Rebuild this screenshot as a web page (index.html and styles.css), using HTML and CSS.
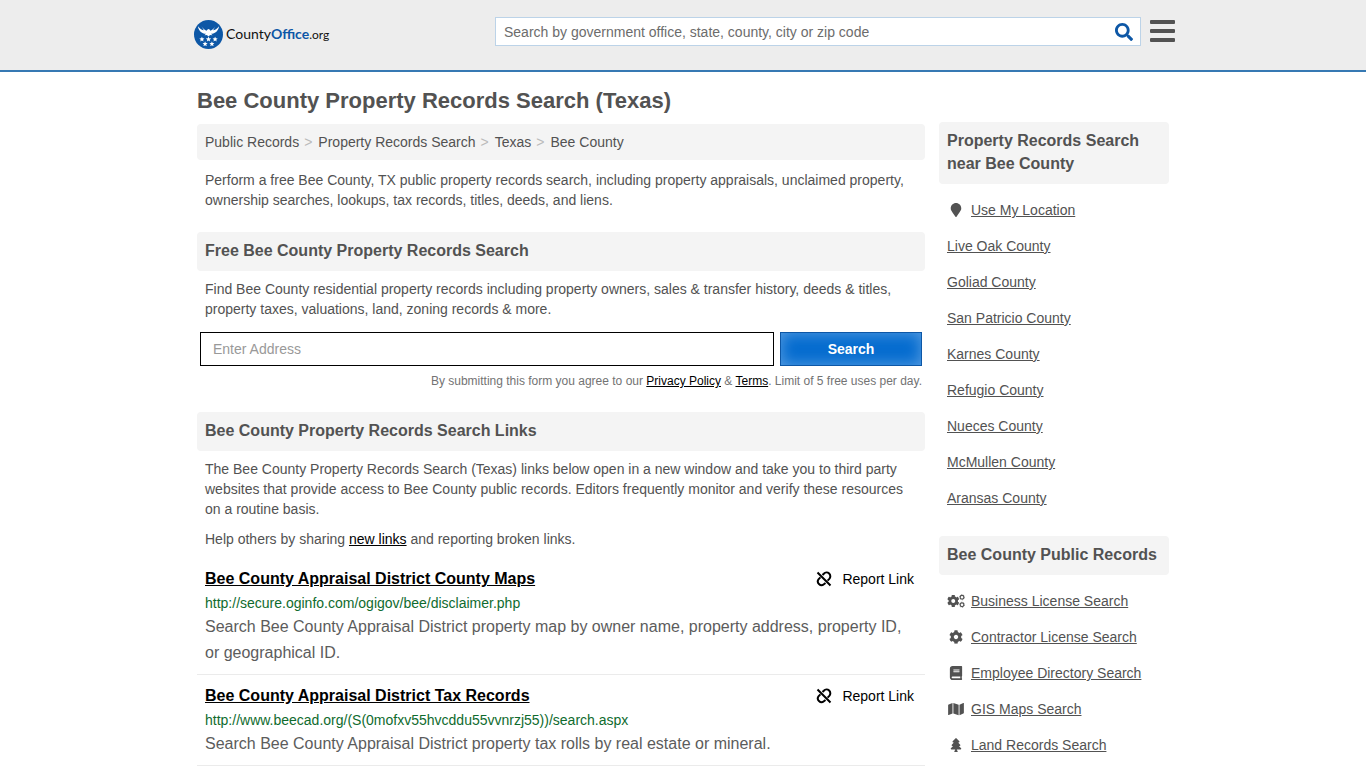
FILE: index.html
```html
<!DOCTYPE html>
<html lang="en">
<head>
<meta charset="utf-8">
<title>Bee County Property Records Search (Texas)</title>
<meta name="viewport" content="width=device-width, initial-scale=1">
<link rel="stylesheet" href="styles.css">
</head>
<body>
<svg class="defs" aria-hidden="true">
  <symbol id="cog" viewBox="0 0 512 512"><path d="M487.4 315.7l-42.6-24.6c4.3-23.2 4.3-47 0-70.2l42.6-24.6c4.9-2.8 7.1-8.6 5.5-14-11.1-35.6-30-67.8-54.7-94.6-3.8-4.1-10-5.1-14.8-2.3L380.8 110c-17.9-15.4-38.5-27.3-60.8-35.1V25.8c0-5.6-3.9-10.5-9.4-11.7-36.7-8.2-74.3-7.8-109.2 0-5.5 1.2-9.4 6.1-9.4 11.7V75c-22.2 7.9-42.8 19.8-60.8 35.1L88.7 85.5c-4.9-2.8-11-1.9-14.8 2.3-24.7 26.7-43.6 58.9-54.7 94.6-1.7 5.4.6 11.2 5.5 14L67.3 221c-4.3 23.2-4.3 47 0 70.2l-42.6 24.6c-4.9 2.8-7.1 8.6-5.5 14 11.1 35.6 30 67.8 54.7 94.6 3.8 4.1 10 5.1 14.8 2.3l42.6-24.6c17.9 15.4 38.5 27.3 60.8 35.1v49.2c0 5.6 3.9 10.5 9.4 11.7 36.7 8.2 74.3 7.8 109.2 0 5.5-1.2 9.4-6.1 9.4-11.7v-49.2c22.2-7.9 42.8-19.8 60.8-35.1l42.6 24.6c4.9 2.8 11 1.9 14.8-2.3 24.7-26.7 43.6-58.9 54.7-94.6 1.5-5.5-.7-11.3-5.6-14.1zM256 336c-44.1 0-80-35.9-80-80s35.9-80 80-80 80 35.9 80 80-35.9 80-80 80z"/></symbol>
  <symbol id="unlink" viewBox="0 0 16 16"><path fill="none" stroke="currentColor" stroke-width="2" d="M1.500 1.500l13 13M6.500 4l1.300-1.300a3.700 3.700 0 0 1 5.500 5.200l-1.700 1.700M4.400 6.400L2.700 8.100a3.700 3.700 0 0 0 5.200 5.200L9.500 12"/></symbol>
  <symbol id="star" viewBox="-5 -5 10 10"><path d="M0-5L1.300-1.600 5-1.500 2.100.8 3.100 4.400 0 2.300-3.100 4.400-2.100.8-5-1.500-1.300-1.600z"/></symbol>
</svg>

<header class="topbar">
  <div class="topbar-inner">
    <a class="logo" href="#">
      <svg class="logo-mark" viewBox="0 0 29 29" aria-hidden="true">
        <circle cx="14.500" cy="14.500" r="14.500" fill="#0d57a6"/>
        <g fill="#fff">
          <path d="M4 6.200c.4 4.600 3.800 7.400 8 7.600l-1.600 1.500 2.800-.3.600 1.200h1.400l.6-1.200 2.800.3-1.600-1.500c4.200-.2 7.600-3 8-7.600-2 2.700-4.100 3.700-5.900 4l2.300-4c-1.300 1.900-3 3.600-5 4.600l-.8-1.400-1.500-.3-1.600 1.700c-2-1-3.700-2.700-5-4.600l2.300 4C8.100 9.900 6 8.900 4 6.200z"/>
          <use href="#star" x="5.200" y="16.500" width="5.400" height="5.400"/>
          <use href="#star" x="11.800" y="16.500" width="5.400" height="5.400"/>
          <use href="#star" x="18.400" y="16.500" width="5.400" height="5.400"/>
          <use href="#star" x="8.400" y="21.200" width="5.400" height="5.400"/>
          <use href="#star" x="15.200" y="21.200" width="5.400" height="5.400"/>
        </g>
      </svg>
      <span class="logo-text">County<b>Office</b><span class="logo-tld">.org</span></span>
    </a>
    <form class="site-search">
      <input type="text" aria-label="Search by government office" placeholder="Search by government office, state, county, city or zip code">
      <button type="button" aria-label="Search"><svg viewBox="0 0 512 512"><path d="M505 442.700L405.300 343c-4.500-4.500-10.600-7-17-7H372c27.600-35.300 44-79.700 44-128C416 93.100 322.900 0 208 0S0 93.100 0 208s93.100 208 208 208c48.300 0 92.700-16.400 128-44v16.300c0 6.400 2.500 12.500 7 17l99.700 99.700c9.400 9.400 24.600 9.400 33.900 0l28.300-28.300c9.400-9.400 9.400-24.600.1-34zM208 336c-70.700 0-128-57.200-128-128 0-70.700 57.200-128 128-128 70.700 0 128 57.200 128 128 0 70.700-57.200 128-128 128z"/></svg></button>
    </form>
    <button class="menu" type="button" aria-label="Menu"><span></span><span></span><span></span></button>
  </div>
</header>

<div class="page">
  <main class="main">
    <h1>Bee County Property Records Search (Texas)</h1>
    <nav class="crumbs" aria-label="Breadcrumb">
      <a href="#">Public Records</a><i>&gt;</i><a href="#">Property Records Search</a><i>&gt;</i><a href="#">Texas</a><i>&gt;</i><a href="#">Bee County</a>
    </nav>
    <p class="text">Perform a free Bee County, TX public property records search, including property appraisals, unclaimed property, ownership searches, lookups, tax records, titles, deeds, and liens.</p>

    <section class="section">
      <h2>Free Bee County Property Records Search</h2>
      <p class="text">Find Bee County residential property records including property owners, sales &amp; transfer history, deeds &amp; titles, property taxes, valuations, land, zoning records &amp; more.</p>
      <form class="address">
        <input type="text" aria-label="Address" placeholder="Enter Address">
        <button type="button">Search</button>
      </form>
      <p class="note">By submitting this form you agree to our <a href="#">Privacy Policy</a> &amp; <a href="#">Terms</a>. Limit of 5 free uses per day.</p>
    </section>

    <section class="section">
      <h2>Bee County Property Records Search Links</h2>
      <p class="text">The Bee County Property Records Search (Texas) links below open in a new window and take you to third party websites that provide access to Bee County public records. Editors frequently monitor and verify these resources on a routine basis.</p>
      <p class="text">Help others by sharing <a href="#">new links</a> and reporting broken links.</p>
      <div class="results">
        <article class="result">
          <div class="result-head">
            <h3><a href="#">Bee County Appraisal District County Maps</a></h3>
            <a class="report" href="#"><svg aria-hidden="true"><use href="#unlink"/></svg>Report Link</a>
          </div>
          <div class="url">http://secure.oginfo.com/ogigov/bee/disclaimer.php</div>
          <p>Search Bee County Appraisal District property map by owner name, property address, property ID, or geographical ID.</p>
        </article>
        <article class="result">
          <div class="result-head">
            <h3><a href="#">Bee County Appraisal District Tax Records</a></h3>
            <a class="report" href="#"><svg aria-hidden="true"><use href="#unlink"/></svg>Report Link</a>
          </div>
          <div class="url">http://www.beecad.org/(S(0mofxv55hvcddu55vvnrzj55))/search.aspx</div>
          <p>Search Bee County Appraisal District property tax rolls by real estate or mineral.</p>
        </article>
      </div>
    </section>
  </main>

  <aside class="side">
    <section>
      <h2>Property Records Search near Bee County</h2>
      <ul>
        <li><svg viewBox="0 0 384 512" aria-hidden="true"><path d="M172.268 501.670C26.970 291.031 0 269.413 0 192 0 85.961 85.961 0 192 0s192 85.961 192 192c0 77.413-26.970 99.031-172.268 309.670-9.535 13.774-29.930 13.773-39.464 0z"/></svg><a href="#">Use My Location</a></li>
        <li><a href="#">Live Oak County</a></li>
        <li><a href="#">Goliad County</a></li>
        <li><a href="#">San Patricio County</a></li>
        <li><a href="#">Karnes County</a></li>
        <li><a href="#">Refugio County</a></li>
        <li><a href="#">Nueces County</a></li>
        <li><a href="#">McMullen County</a></li>
        <li><a href="#">Aransas County</a></li>
      </ul>
    </section>
    <section>
      <h2>Bee County Public Records</h2>
      <ul>
        <li><svg viewBox="0 0 640 512" aria-hidden="true"><use href="#cog" x="-10" y="26" width="460" height="460"/><g fill="none" stroke="currentColor"><circle cx="540" cy="118" r="68" stroke-width="42"/><circle cx="540" cy="118" r="94" stroke-width="20" stroke-dasharray="49 49"/><circle cx="540" cy="394" r="68" stroke-width="42"/><circle cx="540" cy="394" r="94" stroke-width="20" stroke-dasharray="49 49"/></g></svg><a href="#">Business License Search</a></li>
        <li><svg viewBox="0 0 512 512" aria-hidden="true"><use href="#cog"/></svg><a href="#">Contractor License Search</a></li>
        <li><svg viewBox="0 0 448 512" aria-hidden="true"><path d="M448 360V24c0-13.300-10.700-24-24-24H96C43 0 0 43 0 96v320c0 53 43 96 96 96h328c13.300 0 24-10.700 24-24v-16c0-7.500-3.500-14.300-8.900-18.700-4.200-15.400-4.200-59.300 0-74.700 5.400-4.300 8.900-11.100 8.900-18.600zM128 134c0-3.300 2.700-6 6-6h212c3.300 0 6 2.700 6 6v20c0 3.300-2.700 6-6 6H134c-3.300 0-6-2.700-6-6v-20zm0 64c0-3.300 2.700-6 6-6h212c3.300 0 6 2.700 6 6v20c0 3.300-2.700 6-6 6H134c-3.300 0-6-2.700-6-6v-20zm253.400 250H96c-17.700 0-32-14.300-32-32 0-17.600 14.400-32 32-32h285.400c-1.900 17.100-1.900 46.900 0 64z"/></svg><a href="#">Employee Directory Search</a></li>
        <li><svg viewBox="0 0 576 512" aria-hidden="true"><path d="M0 117.660v346.320c0 11.320 11.430 19.060 21.940 14.860L160 416V32L20.120 87.950A32.006 32.006 0 0 0 0 117.660zM192 416l192 64V96L192 32v384zM554.060 33.160L416 96v384l139.880-55.950A31.996 31.996 0 0 0 576 394.340V48.020c0-11.320-11.430-19.060-21.940-14.860z"/></svg><a href="#">GIS Maps Search</a></li>
        <li><svg viewBox="0 0 384 512" aria-hidden="true"><path d="M378.310 378.490L298.420 288h30.630c9.010 0 16.980-5 20.780-13.060 3.800-8.040 2.550-17.260-3.280-24.050L268.420 160h28.890c9.100 0 17.300-5.350 20.860-13.610 3.520-8.130 1.860-17.590-4.240-24.080L203.660 4.830c-6.030-6.450-17.280-6.450-23.320 0L70.060 122.310c-6.100 6.490-7.750 15.950-4.240 24.080C69.380 154.650 77.590 160 86.690 160h28.890l-78.140 90.910c-5.810 6.780-7.060 15.990-3.270 24.040C37.970 283 45.930 288 54.950 288h30.630L5.690 378.490c-6 6.790-7.360 16.090-3.560 24.260 3.750 8.050 12 13.250 21.010 13.250H160v24.450l-30.290 48.400c-5.320 10.640 2.420 23.160 14.310 23.160h95.960c11.890 0 19.630-12.520 14.310-23.160L224 440.450V416h136.860c9.010 0 17.260-5.200 21.010-13.250 3.800-8.170 2.440-17.470-3.560-24.260z"/></svg><a href="#">Land Records Search</a></li>
      </ul>
    </section>
  </aside>
</div>
</body>
</html>
```
FILE: styles.css
```css
* { box-sizing: border-box; }
body {
  margin: 0;
  background: #fff;
  color: #525252;
  font: 14px/20px "Liberation Sans", Arial, sans-serif;
}
h1, h2, h3, p, ul { margin: 0; padding: 0; }
a { color: inherit; }
input, button { font-family: inherit; margin: 0; }
.defs { display: none; }

.topbar {
  background: #ededed;
  border-bottom: 2px solid #3679b3;
}
.topbar-inner {
  max-width: 984px;
  height: 70px;
  margin: 0 auto;
  display: flex;
  align-items: flex-start;
  padding: 17px 0 0 3px;
}
.logo {
  display: flex;
  align-items: center;
  gap: 3px;
  margin-top: 3px;
  color: #111;
  text-decoration: none;
}
.logo-mark { width: 29px; height: 29px; }
.logo-text { font: 14px/20px Lato, sans-serif; }
.logo-text b { color: #0d57a6; }
.logo-tld { font-size: 12px; }
.site-search {
  flex: 0 1 646px;
  height: 29px;
  margin-left: auto;
  display: flex;
  background: #fff;
  border: 1px solid #bcd3e8;
}
.site-search input {
  flex: 1;
  min-width: 0;
  border: 0;
  padding: 0 8px;
  background: none;
  font-size: 14px;
}
.site-search input::placeholder { color: #6c6c6c; }
.site-search button {
  width: 33px;
  padding: 0;
  border: 0;
  background: none;
  display: flex;
  align-items: center;
  justify-content: center;
}
.site-search svg { width: 18px; height: 18px; fill: #0d57a6; }
.menu {
  width: 25px;
  margin: 3px 0 0 9px;
  padding: 0;
  border: 0;
  background: none;
  display: grid;
  gap: 5px;
}
.menu span { height: 4px; border-radius: 1px; background: #525252; }

.page {
  max-width: 972px;
  margin: 0 auto;
  display: grid;
  grid-template-columns: minmax(0, 1fr) 230px;
  gap: 14px;
}
h1 { font-size: 22px; line-height: 28px; padding: 15px 0 9px; }
h2 {
  padding: 7px 8px 9px;
  border-radius: 4px;
  background: #f4f4f4;
  font-size: 16px;
  line-height: 23px;
}
.crumbs {
  padding: 8px;
  border-radius: 4px;
  background: #f4f4f4;
}
.crumbs a { text-decoration: none; }
.crumbs i { margin: 0 6px 0 5px; color: #bbb; font-style: normal; }
.text { padding: 0 8px; margin-top: 10px; }
.text a, .note a { color: #000; }
.section { margin-top: 22px; }
h2 + .text { margin-top: 8px; }

.address { display: flex; gap: 6px; margin: 13px 3px 0; }
.address input {
  flex: 1;
  min-width: 0;
  height: 34px;
  padding: 0 12px;
  border: 1px solid #000;
  font-size: 14px;
}
.address input::placeholder { color: #999; }
.address button {
  width: 142px;
  border: 1px solid #0d57a6;
  background: #056ccf;
  box-shadow: inset 0 0 15px #5b9fe2;
  color: #fff;
  font-size: 14px;
  font-weight: bold;
}
.note {
  margin: 7px 3px 0;
  text-align: right;
  font-size: 12px;
  line-height: 17px;
  color: #737373;
}

.results { margin-top: 9px; }
.result { padding: 8px 8px 8px; border-bottom: 1px solid #ebebeb; }
.result-head {
  display: flex;
  justify-content: space-between;
  padding-right: 3px;
  line-height: 26px;
  color: #000;
}
h3 { font-size: 16px; }
.report { display: flex; align-items: center; gap: 10px; text-decoration: none; }
.report svg { width: 16px; height: 16px; }
.url { line-height: 22px; color: #0f6b2e; }
.result p { font-size: 16px; line-height: 26px; color: #5c5c5c; }

.side { padding-top: 50px; }
.side section + section { margin-top: 20px; }
.side ul { padding: 8px 8px 0; list-style: none; }
.side li { display: flex; align-items: center; gap: 6px; height: 36px; }
.side li svg { width: 18px; height: 14px; fill: currentColor; }
```
